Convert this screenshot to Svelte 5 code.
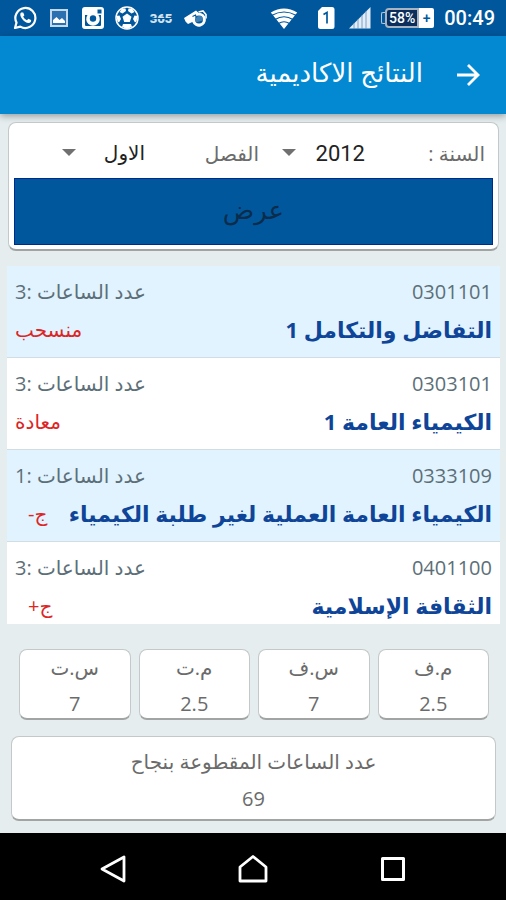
<script lang="ts">
  type Course = { code: string; name: string; hours: number; grade: string; letter?: boolean };

  const courses: Course[] = [
    { code: '0301101', name: 'التفاضل والتكامل 1', hours: 3, grade: 'منسحب' },
    { code: '0303101', name: 'الكيمياء العامة 1', hours: 3, grade: 'معادة' },
    { code: '0333109', name: 'الكيمياء العامة العملية لغير طلبة الكيمياء', hours: 1, grade: 'ج-', letter: true },
    { code: '0401100', name: 'الثقافة الإسلامية', hours: 3, grade: 'ج+', letter: true },
  ];

  const stats = [
    { label: 'م.ف', value: '2.5' },
    { label: 'س.ف', value: '7' },
    { label: 'م.ت', value: '2.5' },
    { label: 'س.ت', value: '7' },
  ];

  let year = $state('2012');
  let term = $state('الاول');
</script>

<div class="screen" dir="rtl">
  <div class="status" dir="ltr">
    <div class="notifications">
      <svg viewBox="0 0 24 24" width="24" height="24">
        <path d="M2 22l1.5-5.4A10 10 0 1 1 7.300 20.600z" fill="none" stroke="#fff" stroke-width="2.200" stroke-linejoin="round" />
        <path d="M8 6.500c-3 3 3.500 11 8 10.500 2-.4 2.500-2 2-3l-2.600-1.300-1.500 1.500c-1.600-.6-3-2-3.700-3.600l1.200-1.400L10.200 6.500z" fill="#fff" />
      </svg>
      <svg viewBox="0 0 24 24" width="24" height="24">
        <rect x="4" y="4" width="16" height="16" fill="#2b70b0" stroke="#c5d9ec" stroke-width="2" />
        <path d="M6 17v-3l3.500-3 3 3 2.500-2 3 3v2z" fill="#fff" />
      </svg>
      <svg viewBox="0 0 24 24" width="24" height="24">
        <path fill-rule="evenodd" d="M4 1h16a3 3 0 0 1 3 3v16a3 3 0 0 1-3 3H4a3 3 0 0 1-3-3V4a3 3 0 0 1 3-3zM4 9v10q0 1 1 1h14q1 0 1-1V9h-2.500a6.800 6.800 0 1 1-11 0zM16.500 3.500v4H20.500v-4z" fill="#fff" />
        <circle cx="12" cy="12.500" r="4.800" fill="#fff" />
        <circle cx="12" cy="12.500" r="3.200" fill="#00579c" />
      </svg>
      <svg viewBox="0 0 24 24" width="24" height="24">
        <circle cx="12" cy="12" r="11" fill="#00579c" stroke="#fff" stroke-width="1.500" />
        <path d="M12 7.500l4.500 3.200-1.700 5.300H9.200l-1.700-5.300zM7 2.500h3.500L11 5 7.500 7.500 4.500 6zM17 2.500h-3.500L13 5l3.500 2.500 3-1.500zM1.500 10L4.500 9.500 6 13l-2 3.500-1.500-1zM22.500 10l-3-.5L18 13l2 3.500 1.500-1zM8 18h8l1 3-5 2-5-2z" fill="#fff" />
      </svg>
      <svg viewBox="0 0 24 24" width="24" height="24">
        <text class="brand" x="12" y="17" text-anchor="middle">365</text>
        <path d="M0 12.500h24" stroke="#00579c" stroke-width="1" />
      </svg>
      <svg viewBox="0 0 24 24" width="24" height="24">
        <path d="M2.500 15.500L1 12 13 4.500l2.500 2.200a7 7 0 1 1-6.200 9.300L5 18z" fill="#fff" />
        <circle cx="16" cy="13.500" r="4" fill="#00579c" />
        <path d="M16 9.500a4 4 0 0 1 3.800 5l-6 1.800a4 4 0 0 1-1.600-4z" fill="#fff" opacity=".25" />
        <path d="M9.500 10.500l3-1.500.8 2.500M15.500 6.500L20 4.500l3 3v4" fill="none" stroke="#00579c" stroke-width="1.200" />
        <path d="M15.500 6L20 5l3 3.500v4" fill="none" stroke="#fff" stroke-width="1.600" />
      </svg>
    </div>
    <div class="indicators">
      <svg viewBox="0 0 28 24" width="28" height="24">
        <path d="M14 23L.8 6.500Q14-1.500 27.200 6.500z" fill="#fff" />
        <path d="M1.500 9.500Q14 2.500 26.500 9.500M5 13.500Q14 8 23 13.500M8.500 17.500Q14 14 19.500 17.500" fill="none" stroke="#00579c" stroke-width="1.200" />
      </svg>
      <svg class="sim" viewBox="0 0 18 24" width="18" height="24">
        <path d="M5 1h10a2.500 2.500 0 0 1 2.500 2.500v17A2.500 2.500 0 0 1 15 23H3.500A2.500 2.500 0 0 1 1 20.500V5z" fill="#fff" />
        <path d="M6.500 8.500l3.500-2v11" fill="none" stroke="#00579c" stroke-width="1.700" />
      </svg>
      <svg class="signal" viewBox="0 0 22 24" width="22" height="24">
        <path d="M0 22.500L21.500 1v21.500z" fill="#e4edf6" />
        <path d="M5 17v6M9 13v10M13 9v14M17 5v18" stroke="#5b90c0" stroke-width=".8" />
      </svg>
      <div class="battery">
        <span class="cap"></span>
        <span class="charge">58%</span>
        <span class="plus">+</span>
      </div>
      <span class="clock">00:49</span>
    </div>
  </div>

  <header>
    <button class="back" aria-label="رجوع">
      <svg viewBox="0 0 24 24" width="24" height="24">
        <path d="M1 12h20M12 2l10 10-10 10" fill="none" stroke="#fff" stroke-width="2.800" />
      </svg>
    </button>
    <h1>النتائج الاكاديمية</h1>
  </header>

  <main>
    <form class="card search" onsubmit={(e) => e.preventDefault()}>
      <div class="filters">
        <label for="year">السنة :</label>
        <div class="picker">
          <select id="year" bind:value={year}>
            <option>2012</option>
          </select>
          <span class="caret"></span>
        </div>
        <label for="term">الفصل</label>
        <div class="picker">
          <select id="term" class="arabic" bind:value={term}>
            <option>الاول</option>
          </select>
          <span class="caret"></span>
        </div>
      </div>
      <button class="show">عرض</button>
    </form>

    <ul class="courses">
      {#each courses as course}
        <li>
          <div class="line">
            <span>{course.code}</span>
            <span>عدد الساعات :{course.hours}</span>
          </div>
          <div class="line">
            <span class="name">{course.name}</span>
            <span class="grade" class:letter={course.letter}>{course.grade}</span>
          </div>
        </li>
      {/each}
    </ul>

    <div class="stats">
      {#each stats as stat}
        <div class="card stat">
          <span>{stat.label}</span>
          <span>{stat.value}</span>
        </div>
      {/each}
    </div>

    <div class="card total">
      <span>عدد الساعات المقطوعة بنجاح</span>
      <span>69</span>
    </div>
  </main>

  <nav dir="ltr">
    <button aria-label="Back">
      <svg viewBox="0 0 30 30" width="30" height="30">
        <path d="M26 3v24L4 15z" fill="none" stroke="#fff" stroke-width="2.800" stroke-linejoin="round" />
      </svg>
    </button>
    <button aria-label="Home">
      <svg viewBox="0 0 30 30" width="30" height="30">
        <path d="M15 2.500L28 13v14H2V13z" fill="none" stroke="#fff" stroke-width="2.800" stroke-linejoin="round" />
      </svg>
    </button>
    <button aria-label="Recent apps">
      <svg viewBox="0 0 30 30" width="30" height="30">
        <rect x="4.500" y="4.500" width="21" height="21" fill="none" stroke="#fff" stroke-width="3" stroke-linejoin="round" />
      </svg>
    </button>
  </nav>
</div>

<style>
  :global(body) {
    margin: 0;
    background: #e5edee;
  }
  .screen {
    display: flex;
    flex-direction: column;
    height: 100vh;
    font-family: "Open Sans", "DejaVu Sans", sans-serif;
    font-size: 20px;
    color: #6b6b6b;
    background: #e5edee;
  }
  button {
    padding: 0;
    border: 0;
    background: none;
    font-family: inherit;
    cursor: pointer;
  }
  svg {
    display: block;
  }

  .status {
    display: flex;
    justify-content: space-between;
    align-items: center;
    flex: none;
    height: 36px;
    padding: 0 11px 0 13px;
    background: #00579c;
    color: #fff;
    font-family: Roboto, sans-serif;
  }
  .notifications {
    display: flex;
    gap: 10px;
  }
  .brand {
    font: 900 13px Roboto, sans-serif;
    fill: #d5e3f0;
  }
  .indicators {
    display: flex;
    align-items: center;
  }
  .sim {
    margin-left: 19px;
  }
  .signal {
    margin: 0 10px 0 14px;
  }
  .battery {
    display: flex;
    align-items: center;
    margin-right: 10px;
    font-size: 14px;
    font-weight: 500;
    line-height: 16px;
  }
  .cap {
    width: 3px;
    height: 10px;
    border: 1px solid #b5c5d5;
    border-right: 0;
    border-radius: 2px 0 0 2px;
  }
  .charge {
    padding: 0 2px;
    border: 2px solid #a9b4c2;
    border-radius: 4px 0 0 4px;
    background: #0b2e5c;
  }
  .plus {
    width: 15px;
    height: 20px;
    line-height: 20px;
    text-align: center;
    border-radius: 0 2px 2px 0;
    background: #fff;
    color: #00579c;
  }
  .clock {
    font-size: 20px;
    font-weight: 500;
  }

  header {
    display: flex;
    align-items: center;
    gap: 33px;
    flex: none;
    height: 78px;
    padding: 0 26px;
    background: #0388d2;
    color: #fff;
    box-shadow: 0 2px 7px rgba(0, 0, 0, 0.35);
  }
  h1 {
    margin: 0;
    padding-bottom: 6px;
    font-size: 26px;
    font-weight: 400;
  }

  main {
    display: flex;
    flex-direction: column;
    flex: 1;
    min-height: 0;
    padding: 8px 6px 12px 7px;
  }
  .card {
    background: #fff;
    border: 1px solid #c4c8c8;
    border-bottom: 2px solid #a2a4a4;
    border-radius: 8px;
  }
  .search {
    margin: 0 1px;
    padding: 0 5px 4px;
  }
  .filters {
    display: grid;
    grid-template-columns: 120fr 106fr 114fr 125fr;
    align-items: center;
    box-sizing: border-box;
    height: 55px;
    padding: 5px 8px 0 6px;
  }
  .picker {
    position: relative;
    width: 84px;
  }
  select {
    appearance: none;
    width: 100%;
    height: 40px;
    padding: 0;
    border: 0;
    background: none;
    color: #222;
    font: 22px Roboto, sans-serif;
  }
  select.arabic {
    font: 20px "DejaVu Sans", sans-serif;
  }
  .caret {
    position: absolute;
    left: 1px;
    top: 16px;
    border: 7px solid transparent;
    border-top-color: #707070;
    border-bottom: 0;
    pointer-events: none;
  }
  .show {
    display: block;
    width: 100%;
    height: 67px;
    padding-bottom: 6px;
    border: 1px solid #002b8c;
    background: #00579c;
    color: #0c2c4c;
    font-size: 26px;
  }

  .courses {
    flex: 1;
    min-height: 0;
    margin: 15px 0 0;
    padding: 0;
    overflow-y: auto;
    scrollbar-width: none;
    list-style: none;
  }
  li {
    box-sizing: border-box;
    height: 92px;
    padding: 6px 8px 0;
    border-bottom: 1px solid #d0dee4;
    background: #fff;
  }
  li:nth-child(odd) {
    background: #e1f3fe;
  }
  .line {
    display: flex;
    justify-content: space-between;
    align-items: center;
    height: 38px;
    white-space: nowrap;
    color: #5c6f78;
  }
  .name {
    color: #0f4598;
    font-size: 22px;
    font-weight: 700;
  }
  .grade {
    color: #dc2626;
  }
  .letter {
    padding-left: 13px;
  }

  .stats {
    display: grid;
    grid-template-columns: repeat(4, 1fr);
    gap: 8px;
    margin: 25px 11px 16px 12px;
  }
  .stat,
  .total {
    display: flex;
    flex-direction: column;
    align-items: center;
    line-height: 28px;
  }
  .stat {
    gap: 8px;
    padding-top: 4px;
  }
  .total {
    gap: 9px;
    margin: 0 4px;
    padding: 11px 0 6px;
  }

  nav {
    display: flex;
    justify-content: center;
    align-items: center;
    gap: 110px;
    flex: none;
    box-sizing: border-box;
    height: 67px;
    padding-top: 4px;
    background: #000;
  }
</style>
